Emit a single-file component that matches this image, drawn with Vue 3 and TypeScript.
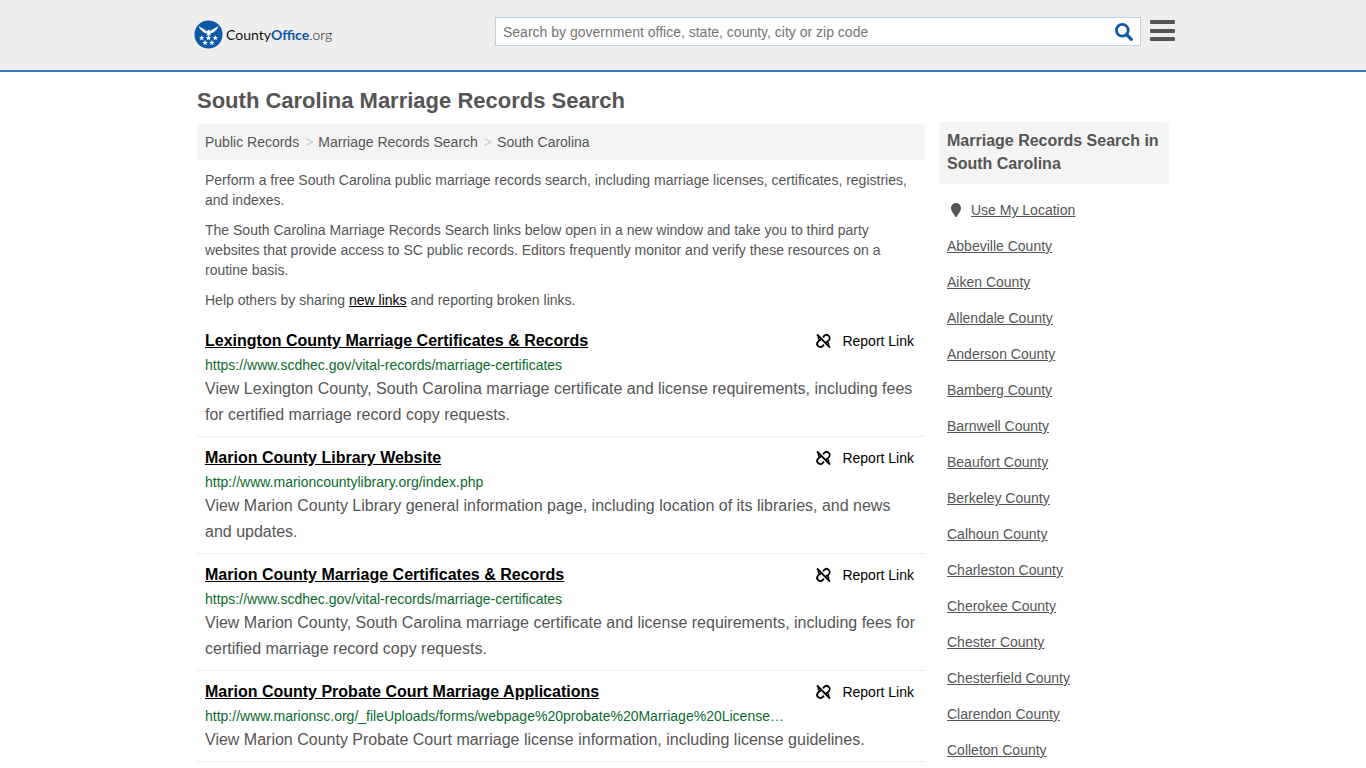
<script setup lang="ts">
interface RecordLink {
  title: string
  url: string
  text: string
}

const records: RecordLink[] = [
  {
    title: 'Lexington County Marriage Certificates & Records',
    url: 'https://www.scdhec.gov/vital-records/marriage-certificates',
    text: 'View Lexington County, South Carolina marriage certificate and license requirements, including fees for certified marriage record copy requests.',
  },
  {
    title: 'Marion County Library Website',
    url: 'http://www.marioncountylibrary.org/index.php',
    text: 'View Marion County Library general information page, including location of its libraries, and news and updates.',
  },
  {
    title: 'Marion County Marriage Certificates & Records',
    url: 'https://www.scdhec.gov/vital-records/marriage-certificates',
    text: 'View Marion County, South Carolina marriage certificate and license requirements, including fees for certified marriage record copy requests.',
  },
  {
    title: 'Marion County Probate Court Marriage Applications',
    url: 'http://www.marionsc.org/_fileUploads/forms/webpage%20probate%20Marriage%20License…',
    text: 'View Marion County Probate Court marriage license information, including license guidelines.',
  },
]

const counties: string[] = [
  'Abbeville', 'Aiken', 'Allendale', 'Anderson', 'Bamberg', 'Barnwell', 'Beaufort', 'Berkeley',
  'Calhoun', 'Charleston', 'Cherokee', 'Chester', 'Chesterfield', 'Clarendon', 'Colleton',
]

const stars: [number, number][] = [[8, 18.5], [15, 18.5], [22, 18.5], [11.5, 23.5], [18.5, 23.5]]
</script>

<template>
  <header class="top">
    <div class="top-inner">
      <a class="logo" href="#" aria-label="CountyOffice.org">
        <svg class="seal" viewBox="0 0 30 30" aria-hidden="true">
          <circle cx="15" cy="15" r="14.5" fill="#0d57a8" />
          <path
            fill="#fff"
            d="M5 6.500C8 8.500 11.500 9.500 13.300 12l.7-1.300 1.500-.5 1 .8-.3 1C18.500 9.500 22 8.500 25.200 6.500c-.5 2-1.500 3.400-3 4.300-1 1.500-2.500 2.500-4.700 2.900l-1 .8 1 1.600h-4.600l1-1.600-1-.8c-2.200-.4-3.900-1.400-4.900-2.900-1.500-.9-2.500-2.300-3-4.300z"
          />
          <path
            v-for="[x, y] in stars"
            :key="`${x}-${y}`"
            :transform="`translate(${x} ${y})`"
            fill="#fff"
            d="M0-2.800.8-.9 2.800-.8 1.200.5 1.800 2.500 0 1.400-1.800 2.500-1.200.5-2.800-.8-.8-.9z"
          />
        </svg>
        <span class="brand">County<b>Office</b><i>.org</i></span>
      </a>
      <form class="search" role="search" @submit.prevent>
        <input
          type="text"
          aria-label="Search"
          placeholder="Search by government office, state, county, city or zip code"
        />
        <button type="submit" aria-label="Search">
          <svg viewBox="0 0 18 18" width="18" height="18" aria-hidden="true">
            <circle cx="7.300" cy="7.300" r="5.900" fill="none" stroke="#0d57a8" stroke-width="2.800" />
            <path d="M11.700 11.700l4.600 4.600" stroke="#0d57a8" stroke-width="3.200" stroke-linecap="round" />
          </svg>
        </button>
      </form>
      <button class="menu" type="button" aria-label="Menu">
        <svg viewBox="0 0 25 22" width="25" height="22" fill="#555" aria-hidden="true">
          <rect y="0" width="25" height="4" rx="1" />
          <rect y="9" width="25" height="4" rx="1" />
          <rect y="17" width="25" height="4" rx="1" />
        </svg>
      </button>
    </div>
  </header>

  <div class="page">
    <h1>South Carolina Marriage Records Search</h1>
    <div class="columns">
      <main>
        <nav class="crumbs" aria-label="Breadcrumb">
          <a href="#">Public Records</a><span>&gt;</span>
          <a href="#">Marriage Records Search</a><span>&gt;</span>
          <a href="#">South Carolina</a>
        </nav>
        <div class="intro">
          <p>Perform a free South Carolina public marriage records search, including marriage licenses, certificates, registries, and indexes.</p>
          <p>The South Carolina Marriage Records Search links below open in a new window and take you to third party websites that provide access to SC public records. Editors frequently monitor and verify these resources on a routine basis.</p>
          <p>Help others by sharing <a href="#">new links</a> and reporting broken links.</p>
        </div>
        <article v-for="record in records" :key="record.title" class="record">
          <div class="record-head">
            <a class="title" href="#">{{ record.title }}</a>
            <button class="report" type="button">
              <svg viewBox="0 0 16 16" width="16" height="16" fill="none" stroke="#000" stroke-width="1.800" aria-hidden="true">
                <path d="M2 1.500l13 13" />
                <path d="M8 4.300l1.200-1.400a3.100 3.100 0 0 1 4.600 4.400l-2.400 2.200" />
                <path d="M9 11.700l-1.400 1.400a3.100 3.100 0 0 1-4.500-4.400L5.300 6.400" />
                <path d="M3.400 3.200q-.8 3 2.400 4.400M13.600 12.800q.8-3-2.400-4.400" stroke-width="1.300" />
              </svg>
              <span>Report Link</span>
            </button>
          </div>
          <div class="url">{{ record.url }}</div>
          <p class="text">{{ record.text }}</p>
        </article>
      </main>
      <aside>
        <h2>Marriage Records Search in South Carolina</h2>
        <ul>
          <li class="locate">
            <svg viewBox="0 0 10 14" width="10" height="14" aria-hidden="true">
              <path fill="#555" d="M5 0a5 5 0 0 1 5 5c0 3-2.500 5.500-4.200 8.500q-.8 1-1.600 0C2.500 10.500 0 8 0 5a5 5 0 0 1 5-5z" />
            </svg>
            <a href="#">Use My Location</a>
          </li>
          <li v-for="county in counties" :key="county"><a href="#">{{ county }} County</a></li>
        </ul>
      </aside>
    </div>
  </div>
</template>

<style>
body {
  background: #fff;
}
</style>

<style scoped>
* {
  box-sizing: border-box;
}
.top,
.page,
input,
button {
  font-family: "Liberation Sans", Arial, sans-serif;
  font-size: 14px;
}
.top,
.page {
  color: #555;
}
a {
  color: inherit;
}
button {
  padding: 0;
  border: 0;
  background: none;
  color: #000;
  cursor: pointer;
}
svg {
  display: block;
}
.top {
  height: 72px;
  background: #eee;
  border-bottom: 2px solid #337ab7;
}
.top-inner {
  display: flex;
  align-items: flex-start;
  max-width: 984px;
  margin: 0 auto;
  padding: 17px 0 0 3px;
}
.logo {
  display: flex;
  align-items: center;
  gap: 3px;
  margin-top: 3px;
  text-decoration: none;
}
.seal {
  width: 29px;
  height: 29px;
}
.brand {
  font: 14px/20px Lato, sans-serif;
  color: #111;
}
.brand b {
  color: #0d57a8;
}
.brand i {
  font-style: normal;
  font-weight: 300;
}
.search {
  display: flex;
  flex: 0 1 646px;
  height: 29px;
  margin-left: auto;
  background: #fff;
  border: 1px solid #bcd3e6;
}
.search input {
  flex: 1;
  min-width: 0;
  padding: 0 7px;
  border: 0;
  background: none;
  outline: 0;
}
.search input::placeholder {
  color: #757575;
}
.search button {
  padding: 0 7px;
}
.menu {
  margin: 3px 0 0 9px;
}
.page {
  max-width: 972px;
  margin: 0 auto;
}
h1 {
  margin: 0;
  padding: 17px 0 9px;
  font-size: 22px;
  line-height: 24px;
}
.columns {
  display: flex;
  align-items: flex-start;
  gap: 14px;
}
main {
  flex: 1;
  min-width: 0;
  padding-top: 2px;
}
.crumbs {
  display: flex;
  padding: 8px;
  border-radius: 4px;
  background: #f4f4f4;
  line-height: 20px;
}
.crumbs a {
  text-decoration: none;
}
.crumbs span {
  padding: 0 5px 0 6px;
  color: #ccc;
}
.intro {
  padding: 10px 8px 0;
}
.intro p {
  margin: 0 0 10px;
  line-height: 20px;
}
.intro a {
  color: #000;
}
.record {
  padding: 8px;
  border-bottom: 1px solid #eee;
}
.record-head {
  display: flex;
  justify-content: space-between;
  line-height: 26px;
}
.title {
  color: #000;
  font-size: 16px;
  font-weight: bold;
}
.report {
  display: flex;
  align-items: center;
  gap: 11px;
  margin-right: 3px;
}
.url {
  color: #0a6b2d;
  line-height: 22px;
}
.text {
  margin: 0;
  font-size: 16px;
  line-height: 26px;
}
aside {
  flex: 0 0 230px;
}
h2 {
  margin: 0 0 8px;
  padding: 7px 8px 9px;
  border-radius: 4px;
  background: #f4f4f4;
  font-size: 16px;
  line-height: 23px;
}
ul {
  margin: 0;
  padding: 0 8px;
  list-style: none;
}
li {
  line-height: 20px;
  padding: 8px 0;
}
.locate {
  display: flex;
  align-items: center;
  gap: 10px;
  padding-left: 4px;
}
</style>
